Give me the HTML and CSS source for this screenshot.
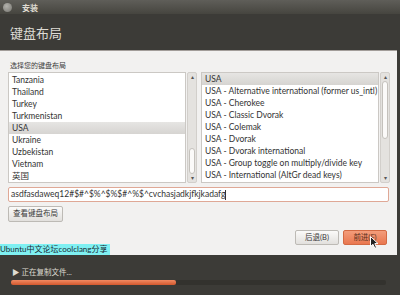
FILE: index.html
```html
<!DOCTYPE html>
<html lang="zh-CN">
<head>
    <meta charset="UTF-8">
    <title>安装</title>
    <link rel="stylesheet" href="styles.css">
</head>
<body>

<!-- 窗口 -->
<div class="window">
    <div class="titlebar">
        <span class="close-dot"></span>
        <span class="title">安装</span>
    </div>
    <div class="header">键盘布局</div>

    <div class="content">
        <div class="label">选择您的键盘布局</div>
        <div class="lists">
            <div class="list left-list">
                <div class="rows">
                    <div class="row">Tanzania</div>
                    <div class="row">Thailand</div>
                    <div class="row">Turkey</div>
                    <div class="row">Turkmenistan</div>
                    <div class="row selected">USA</div>
                    <div class="row">Ukraine</div>
                    <div class="row">Uzbekistan</div>
                    <div class="row">Vietnam</div>
                    <div class="row">英国</div>
                </div>
                <div class="scrollbar">
                    <span class="arrow">▴</span>
                    <span class="thumb thumb-low"></span>
                    <span class="arrow">▾</span>
                </div>
            </div>
            <div class="list right-list">
                <div class="rows">
                    <div class="row selected">USA</div>
                    <div class="row">USA - Alternative international (former us_intl)</div>
                    <div class="row">USA - Cherokee</div>
                    <div class="row">USA - Classic Dvorak</div>
                    <div class="row">USA - Colemak</div>
                    <div class="row">USA - Dvorak</div>
                    <div class="row">USA - Dvorak international</div>
                    <div class="row">USA - Group toggle on multiply/divide key</div>
                    <div class="row">USA - International (AltGr dead keys)</div>
                </div>
                <div class="scrollbar">
                    <span class="arrow">▴</span>
                    <span class="thumb thumb-high"></span>
                    <span class="arrow">▾</span>
                </div>
            </div>
        </div>
        <div class="test-input">asdfasdaweq12#$#^$%^$%$#^%$^cvchasjadkjfkjkadafg<span class="caret"></span></div>
        <div class="btn view-btn">查看键盘布局</div>
        <div class="footer">
            <span class="watermark">Ubuntu中文论坛coolclang分享</span>
            <div class="nav">
                <div class="btn">后退(B)</div>
                <div class="btn primary">前进(F)
                    <!-- 鼠标指针 -->
                    <svg class="cursor" width="9" height="13" viewBox="0 0 9 13">
                        <path d="M0.5 0.5 L0.5 10.5 L3 8.3 L4.8 12.3 L6.5 11.5 L4.8 7.6 L8 7.6 Z" fill="#222" stroke="#fff" stroke-width="1"/>
                    </svg>
                </div>
            </div>
        </div>
    </div>

    <div class="progress-area">
        <div class="progress-label">▶ 正在复制文件...</div>
        <div class="progress-track"><div class="progress-fill" style="width: 44%"></div></div>
    </div>
</div>

</body>
</html>
```

FILE: styles.css
```css
body {
    margin: 0;
    padding: 0;
    width: 400px;
    height: 295px;
    overflow: hidden;
    font-family: Lato, "Noto Sans CJK SC", sans-serif;
    background-color: #3c3b37;
}
.window {
    display: flex;
    flex-direction: column;
    height: 295px;
}
.titlebar {
    height: 14px;
    display: flex;
    align-items: center;
    padding-left: 3px;
    background: linear-gradient(#5f5e59, #46453f);
}
.close-dot {
    width: 9px;
    height: 9px;
    border-radius: 50%;
    background: radial-gradient(circle at 40% 35%, #b3b2ad, #76756f);
}
.title {
    margin-left: 10px;
    font-size: 8px;
    font-weight: bold;
    color: #dfdbd2;
}
.header {
    height: 37px;
    padding-left: 10px;
    display: flex;
    align-items: center;
    padding-top: 1px;
    box-sizing: border-box;
    font-size: 13px;
    color: #dedbd4;
    background-color: #3c3b37;
    border-bottom: 1px solid #a29d99;
    margin-right: 3px;
}
.content {
    height: 204px;
    margin-right: 3px;
    background-color: #f2f1f0;
    display: flex;
    flex-direction: column;
    padding: 10px 0 0 8px;
    box-sizing: border-box;
}
.label {
    font-size: 7px;
    color: #3c3c3c;
    padding-left: 2px;
    height: 11px;
    line-height: 9px;
}
.lists {
    display: flex;
    gap: 4px;
    height: 112px;
}
.list {
    display: flex;
    gap: 1px;
}
.left-list {
    width: 189px;
}
.right-list {
    width: 189px;
}
.rows {
    flex: 1;
    background-color: #fff;
    border: 1px solid #cbc8c4;
    overflow: hidden;
}
.left-list .rows {
    padding-top: 1px;
}
.row {
    height: 12px;
    line-height: 12px;
    font-size: 8.5px;
    color: #333;
    padding-left: 3px;
    white-space: nowrap;
}
.row.selected {
    background: linear-gradient(#e6e5e3, #d6d4d1);
}
.scrollbar {
    width: 8px;
    background-color: #e4e2df;
    border: 1px solid #d2cfcb;
    border-radius: 2px;
    display: flex;
    flex-direction: column;
    align-items: center;
    justify-content: space-between;
}
.arrow {
    font-size: 6px;
    line-height: 8px;
    color: #555;
}
.thumb {
    width: 6px;
    background-color: #fbfaf9;
    border: 1px solid #c4c1bc;
    border-radius: 3px;
    box-sizing: border-box;
}
.thumb-low {
    height: 26px;
    margin-top: auto;
}
.thumb-high {
    height: 58px;
    margin-bottom: auto;
}
.test-input {
    margin-top: 4px;
    width: 381px;
    height: 15px;
    box-sizing: border-box;
    background-color: #fff;
    border: 1px solid #dfa896;
    border-radius: 2px;
    font-size: 8.5px;
    line-height: 13px;
    padding-left: 2px;
    color: #333;
    white-space: nowrap;
}
.caret {
    display: inline-block;
    width: 1px;
    height: 10px;
    background-color: #333;
    vertical-align: middle;
}
.btn {
    font-size: 7.5px;
    color: #3c3c3c;
    height: 16px;
    line-height: 14px;
    padding: 0 5px;
    border: 1px solid #bdbab5;
    border-radius: 2px;
    background: linear-gradient(#fbfaf9, #e2e0dd);
    box-sizing: border-box;
    text-align: center;
}
.view-btn {
    margin-top: 4px;
    width: 55px;
    padding: 0;
}
.footer {
    display: flex;
    justify-content: space-between;
    align-items: flex-start;
    margin-top: 8px;
    margin-left: -8px;
}
.watermark {
    margin-top: 14px;
    background-color: #7ff0f2;
    color: #1a2a33;
    font-size: 8px;
    line-height: 11px;
    padding-right: 2px;
}
.nav {
    display: flex;
    gap: 4px;
    margin-right: 10px;
}
.nav .btn {
    width: 44px;
    height: 15px;
    padding: 0;
}
.nav .btn.primary {
    position: relative;
    background: linear-gradient(#f39d7b, #e9774f);
    border-color: #d36a43;
    color: #5a3222;
}
.cursor {
    position: absolute;
    left: 26px;
    top: 5px;
}
.progress-area {
    flex: 1;
    background-color: #3c3b37;
    padding: 13px 0 0 11px;
}
.progress-label {
    font-size: 7.5px;
    line-height: 10px;
    color: #dfdbd2;
    padding-left: 1px;
}
.progress-track {
    margin-top: 2px;
    width: 375px;
    height: 5px;
    background-color: #33322e;
    border-radius: 2px;
}
.progress-fill {
    height: 5px;
    background: linear-gradient(#f08a62, #d2582e);
    border-radius: 2px;
}
```
